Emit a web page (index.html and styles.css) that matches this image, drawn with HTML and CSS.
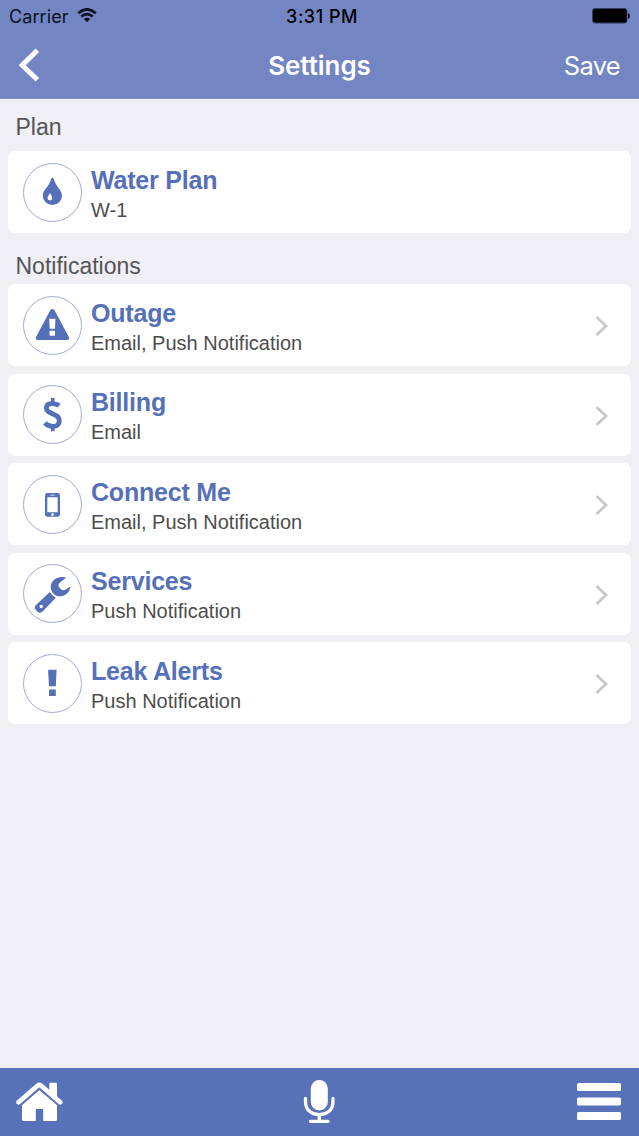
FILE: index.html
```html
<!DOCTYPE html>
<html lang="en">
<head>
<meta charset="utf-8">
<title>Settings</title>
<link rel="stylesheet" href="styles.css">
</head>
<body>
<div class="app">
  <header class="header">
    <div class="status">
      <div class="carrier"><span>Carrier</span>
        <svg class="wifi" width="20" height="15" viewBox="0 0 20 15"><g fill="none" stroke="#0b1020" stroke-width="2.6"><path d="M1.2 5.2Q10-2.6 18.8 5.2"/><path d="M4.3 8.6Q10 3.8 15.7 8.6"/></g><path d="M6.8 11Q10 8.5 13.2 11L10 14Z" fill="#0b1020"/></svg>
      </div>
      <div class="time">3:31 PM</div>
      <svg class="battery" width="38" height="16" viewBox="0 0 38 16"><rect x=".5" y=".5" width="34.5" height="14.5" rx="2.5" fill="#000" stroke="#333d60"/><path d="M36 5Q38 5.5 38 8T36 11Z" fill="#10162a"/></svg>
    </div>
    <nav class="navbar">
      <svg class="back" width="22" height="34" viewBox="0 0 22 34"><path d="M18.4 2.3 3.2 17.2 18.4 31.8" fill="none" stroke="#fff" stroke-width="5"/></svg>
      <h1 class="title">Settings</h1>
      <span class="save">Save</span>
    </nav>
  </header>
  <main class="content">
    <h2 class="section">Plan</h2>
    <div class="card">
      <svg class="icon" viewBox="0 0 59 59"><circle class="ring" cx="29.5" cy="29.5" r="29"/><path d="M29.4 14.7C30.6 14.7 30.8 16 31.2 17.4C33 23.3 39 26.8 39 32.7A9.6 9.4 0 0 1 19.8 32.7C19.8 26.8 25.9 23.3 27.7 17.4C28.1 16 28.3 14.7 29.4 14.7Z"/><path fill="#fff" d="M27 29.7C27.5 32.2 29.3 33 29.3 35A2.4 2.4 0 0 1 24.5 35C24.5 33 26.5 32.2 27 29.7Z"/></svg>
      <div class="text"><div class="name">Water Plan</div><div class="detail">W-1</div></div>
    </div>
    <h2 class="section notifications">Notifications</h2>
    <div class="list">
      <div class="card">
        <svg class="icon" viewBox="0 0 59 59"><circle class="ring" cx="29.5" cy="29.5" r="29"/><path d="M27.3 14.3Q29.4 11.5 31.5 14.3L45.8 41Q47 44 43.8 44H15Q11.8 44 13 41Z"/><path fill="#fff" d="M26.2 22.7H32.4L32 32.8H26.7ZM26.6 34.7H32V39.7H26.6Z"/></svg>
        <div class="text"><div class="name">Outage</div><div class="detail">Email, Push Notification</div></div>
        <svg class="chevron" viewBox="0 0 14 20"><path d="M1.5 1 11 10 1.5 19"/></svg>
      </div>
      <div class="card">
        <svg class="icon" viewBox="0 0 59 59"><circle class="ring" cx="29.5" cy="29.5" r="29"/><path d="M27.9 13H31.6V18H27.9ZM27.9 41H31.6V46.2H27.9Z"/><path d="M36.2 20.7C33 18.2 23.3 16.8 23.3 23C23.3 30 36.3 27.5 36.3 35.8C36.3 42.8 26.5 43 21.9 37.9" fill="none" stroke="#5570b9" stroke-width="4.8"/></svg>
        <div class="text"><div class="name">Billing</div><div class="detail">Email</div></div>
        <svg class="chevron" viewBox="0 0 14 20"><path d="M1.5 1 11 10 1.5 19"/></svg>
      </div>
      <div class="card">
        <svg class="icon" viewBox="0 0 59 59"><circle class="ring" cx="29.5" cy="29.5" r="29"/><rect x="22" y="18" width="15" height="23.7" rx="2.4"/><path fill="#fff" d="M24.3 22.3H34.7V37.3H24.3ZM27.3 19.8H31.7V20.6H27.3Z"/><circle cx="29.5" cy="39.6" r="1.4" fill="#fff"/></svg>
        <div class="text"><div class="name">Connect Me</div><div class="detail">Email, Push Notification</div></div>
        <svg class="chevron" viewBox="0 0 14 20"><path d="M1.5 1 11 10 1.5 19"/></svg>
      </div>
      <div class="card">
        <svg class="icon" viewBox="0 0 59 59"><circle class="ring" cx="29.5" cy="29.5" r="29"/><path d="M43.2 13.8C41 12.8 37 12.6 33.5 14.2C28.5 16.6 26.6 22 28.4 26.2C30.8 32 35.2 33.2 40 31.8C44 30.6 47 27.6 47.3 22.6L41.5 26.2Q39.5 26.6 37.8 25.3L35.7 22.6Q35 20.8 36.3 19Z"/><path d="M26.8 28.1Q29 31.8 32.8 33.8L19.6 47.5Q16.8 50 14.2 47.5L12.6 45.6Q10.8 43 13 40.9Z"/><circle cx="18.2" cy="42.5" r="1.7" fill="#fff"/></svg>
        <div class="text"><div class="name">Services</div><div class="detail">Push Notification</div></div>
        <svg class="chevron" viewBox="0 0 14 20"><path d="M1.5 1 11 10 1.5 19"/></svg>
      </div>
      <div class="card">
        <svg class="icon" viewBox="0 0 59 59"><circle class="ring" cx="29.5" cy="29.5" r="29"/><path d="M25.1 15.7H33.6L32.8 32.2H26ZM26 35.5H32.8V42H26Z"/></svg>
        <div class="text"><div class="name">Leak Alerts</div><div class="detail">Push Notification</div></div>
        <svg class="chevron" viewBox="0 0 14 20"><path d="M1.5 1 11 10 1.5 19"/></svg>
      </div>
    </div>
  </main>
  <footer class="toolbar">
    <svg width="47" height="40" viewBox="0 0 47 40"><path d="M6 23 23.3 7.5 41 23V37.5Q41 39 39.3 39H27.2V27H19.8V39H7.7Q6 39 6 37.5Z" fill="#fff"/><path d="M2.5 20.5 23.3 2.9 44.5 20.5" fill="none" stroke="#5872ba" stroke-width="8"/><path d="M2.6 20.2 21.8 3.5Q23.3 2.3 24.8 3.5L44.2 20.2" fill="none" stroke="#fff" stroke-width="4.8" stroke-linecap="round"/><path d="M33.3 1.5Q33.3.8 34.2.8H40.2Q41 .8 41 1.5V16L33.3 10Z" fill="#fff"/></svg>
    <svg width="32" height="44" viewBox="0 0 32 44"><rect x="7.8" y="0" width="17" height="30.5" rx="8.5" fill="#fff"/><path d="M2.5 18.5V22C2.5 39 30 39 30 22V18.5M16.3 35V41M7.5 41.3H25" fill="none" stroke="#fff" stroke-width="3.3" stroke-linecap="round"/></svg>
    <svg width="44" height="38" viewBox="0 0 44 38"><g fill="#fff"><rect width="44" height="8" rx="1.5"/><rect y="14.5" width="44" height="8" rx="1.5"/><rect y="29" width="44" height="8" rx="1.5"/></g></svg>
  </footer>
</div>
</body>
</html>
```

FILE: styles.css
```css
* { box-sizing: border-box; }
body { margin: 0; background: #efeff4; font-family: "Liberation Sans", Arial, sans-serif; }
.app { width: 639px; height: 1136px; display: flex; flex-direction: column; background: #efeff4; }
.header { height: 99px; flex: none; background: #7385c2; border-bottom: 1px solid #8592c3; font-family: Inter, sans-serif; }
.status { height: 32px; display: grid; grid-template-columns: 1fr auto 1fr; align-items: center; padding: 0 9px; color: #0b1020; font-size: 18px; }
.carrier { display: flex; align-items: center; gap: 8px; letter-spacing: .1px; }
.wifi { margin-top: -1px; }
.time { color: #000; font-weight: 500; font-size: 18px; letter-spacing: .5px; padding-left: 5px; }
.battery { justify-self: end; }
.navbar { height: 66px; display: grid; grid-template-columns: 1fr auto 1fr; align-items: center; padding: 0 19px; color: #fff; }
.title { margin: 0; font-size: 26px; font-weight: 600; letter-spacing: -.05px; }
.save { justify-self: end; font-size: 25.5px; letter-spacing: -.7px; }
.content { flex: 1; padding: 0 8px; }
.section { margin: 0; height: 52px; padding: 0 7.5px; font-size: 23px; font-weight: 400; line-height: 56px; color: #555459; }
.notifications { height: 51px; line-height: 67px; }
.list { display: flex; flex-direction: column; gap: 7.5px; }
.card { height: 82px; display: flex; align-items: center; padding: 0 22px 0 15px; background: #fff; border-radius: 7px; }
.icon { width: 59px; height: 59px; flex: none; fill: #5570b9; }
.ring { fill: none; stroke: #a3a9d5; stroke-width: 1; }
.text { flex: 1; padding: 6px 0 0 9px; }
.name { font-size: 25px; font-weight: 700; line-height: 30px; letter-spacing: -.2px; color: #5570b9; }
.detail { font-size: 20px; line-height: 31px; color: #4d4d4d; }
.chevron { width: 14px; height: 20px; margin-top: 2px; fill: none; stroke: #c7c7cc; stroke-width: 2.8; }
.toolbar { height: 68px; flex: none; display: grid; grid-template-columns: 1fr auto 1fr; align-items: center; padding: 0 18px 0 16px; background: #5872ba; }
.toolbar > :last-child { justify-self: end; }
```
